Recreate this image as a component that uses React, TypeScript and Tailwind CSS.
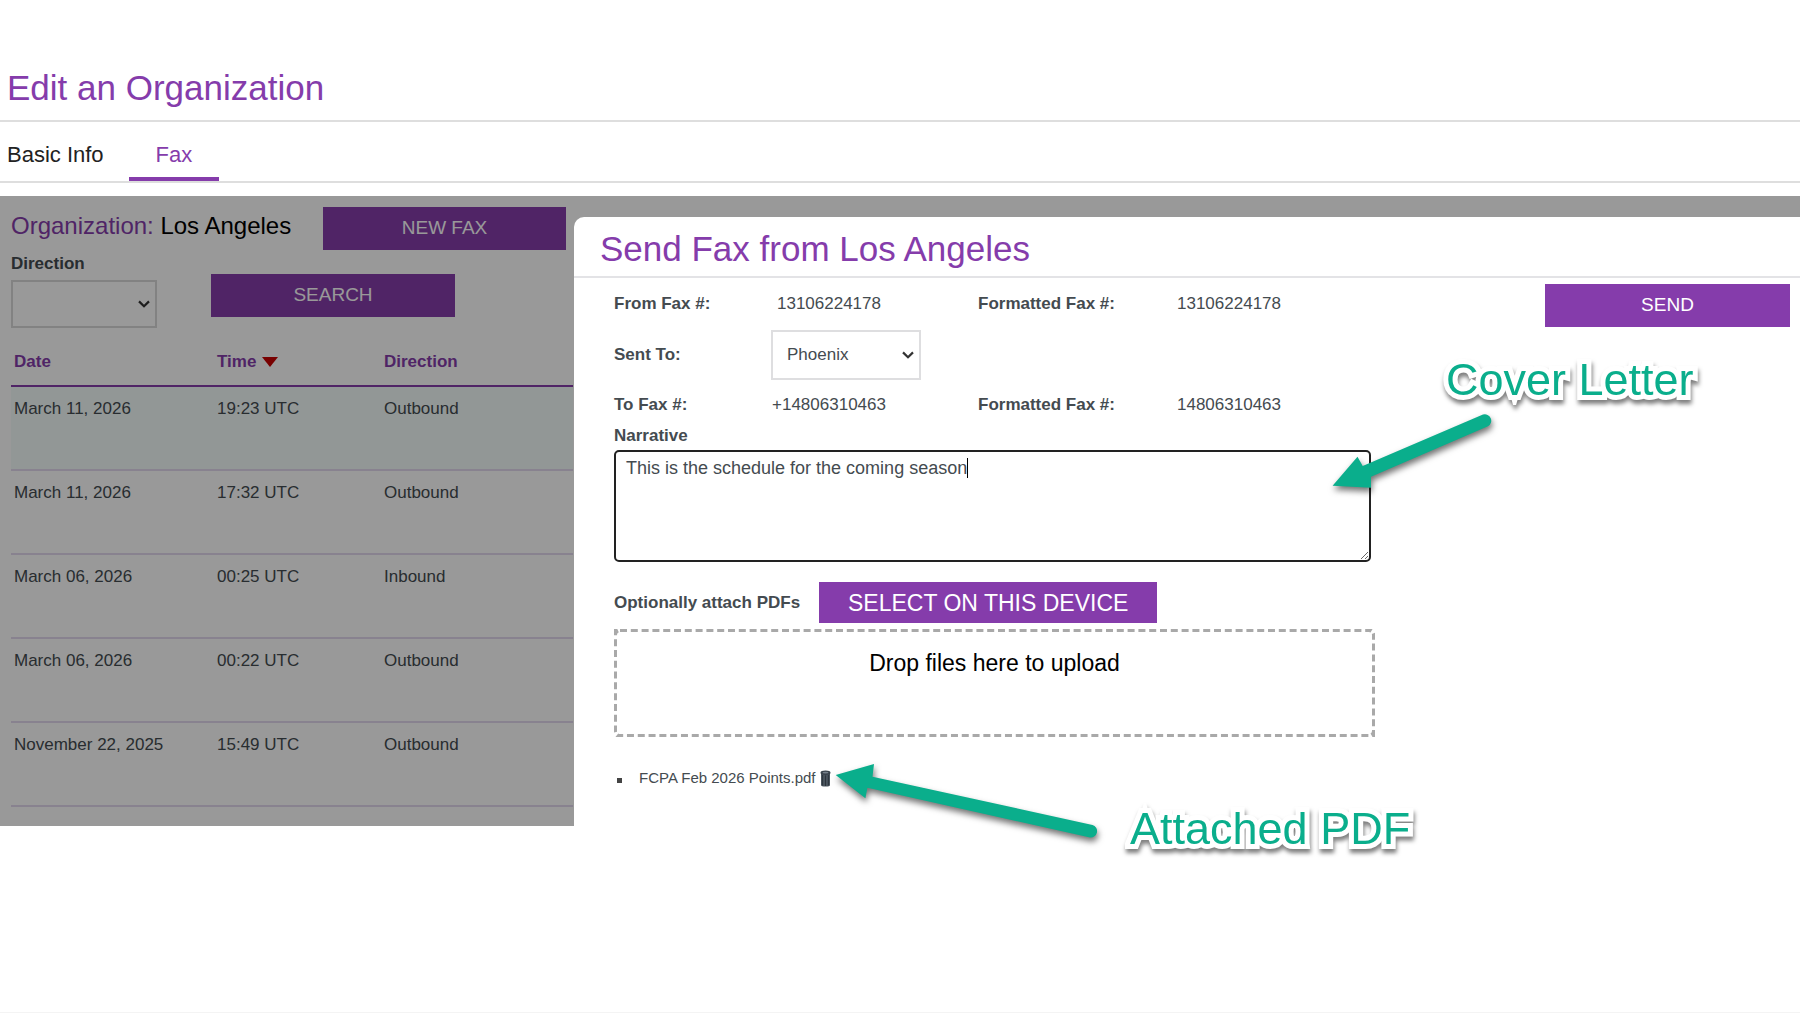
import { useState } from "react";

type FaxRow = {
	date: string;
	time: string;
	direction: string;
};

const faxes: FaxRow[] = [
	{ date: "March 11, 2026", time: "19:23 UTC", direction: "Outbound" },
	{ date: "March 11, 2026", time: "17:32 UTC", direction: "Outbound" },
	{ date: "March 06, 2026", time: "00:25 UTC", direction: "Inbound" },
	{ date: "March 06, 2026", time: "00:22 UTC", direction: "Outbound" },
	{ date: "November 22, 2025", time: "15:49 UTC", direction: "Outbound" },
];

const Chevron = () => (
	<svg
		className="pointer-events-none absolute right-[7px] top-1/2 -translate-y-1/2"
		width="12"
		height="8"
		viewBox="0 0 12 8"
		fill="none"
		stroke="#333"
		strokeWidth="2.2"
	>
		<path d="M1 1.4 6 6.2 11 1.4" />
	</svg>
);

const TrashIcon = () => (
	<svg width="11" height="17" viewBox="0 0 11 17">
		<path d="M1 3.5h9V15q0 1.5-4.5 1.5T1 15Z" fill="#4a545e" />
		<path d="M2.6 5v10.4M5.5 5.4v10.6M8.4 5v10.4" stroke="#2c343c" strokeWidth="1" />
		<ellipse cx="5.5" cy="2.8" rx="5" ry="2.2" fill="#3a434c" />
		<ellipse cx="5.5" cy="2.6" rx="3" ry="0.9" fill="#76818b" />
	</svg>
);

const FaxList = () => {
	return (
		<div className="w-[574px] shrink-0 pt-[11px] pr-2 pb-[14px] pl-[11px]">
			<div className="flex items-center justify-between">
				<h2 className="pb-[6px] text-[24px] leading-8 text-black">
					<span className="text-[#853cab]">Organization:</span> Los Angeles
				</h2>
				<button className="h-[43px] w-[243px] bg-[#853cab] text-[19px] text-white">NEW FAX</button>
			</div>

			<div className="mt-1 flex items-start gap-[54px]">
				<div>
					<label htmlFor="direction" className="block text-[17px] leading-5 font-bold">
						Direction
					</label>
					<div className="relative mt-[6px]">
						<select
							id="direction"
							className="block h-12 w-[146px] appearance-none border-2 border-[#d9d9d9] bg-transparent px-4"
						>
							<option></option>
							<option>Inbound</option>
							<option>Outbound</option>
						</select>
						<Chevron />
					</div>
				</div>
				<button className="mt-5 h-[43px] w-[244px] bg-[#853cab] text-[19px] text-white">
					SEARCH
				</button>
			</div>

			<table className="w-[562px] table-fixed border-separate border-spacing-0 text-left text-[17px] leading-5">
				<thead className="text-[#853cab]">
					<tr className="h-[59px] *:border-b-2 *:border-[#853cab] *:pl-[3px] *:pt-[10px]">
						<th className="w-[203px]">Date</th>
						<th className="w-[167px]">
							<span className="flex items-center gap-[6px]">
								Time
								<svg width="16" height="10" viewBox="0 0 16 10">
									<path d="M0 0h16L8 10Z" fill="#c80000" />
								</svg>
							</span>
						</th>
						<th>Direction</th>
					</tr>
				</thead>
				<tbody>
					{faxes.map((fax, index) => (
						<tr
							key={index}
							className="h-[84px] align-top first:bg-[#f4fcfb] *:border-b-2 *:border-[#e3d9ee] *:pl-[3px] *:pt-3"
						>
							<td>{fax.date}</td>
							<td>{fax.time}</td>
							<td>{fax.direction}</td>
						</tr>
					))}
				</tbody>
			</table>
		</div>
	);
};

const SendFax = () => {
	const [narrative, setNarrative] = useState("This is the schedule for the coming season");

	return (
		<div className="relative z-10 mt-[21px] min-w-0 flex-1 rounded-tl-[10px] bg-white">
			<header className="border-b-2 border-[#e3e3e6] pt-3 pb-[7px] pl-[26px]">
				<h2 className="text-[35px] leading-10 text-[#853cab]">Send Fax from Los Angeles</h2>
			</header>

			<div className="flex items-start justify-between pr-[10px] pb-[38px] pl-10">
				<form className="w-[761px]" onSubmit={(e) => e.preventDefault()}>
					<div className="grid grid-cols-[157px_207px_199px_auto] grid-rows-[52px_50px_50px] items-center text-[17px] leading-5">
						<b>From Fax #:</b>
						<span className="w-[116px] text-center">13106224178</span>
						<b>Formatted Fax #:</b>
						<span>13106224178</span>

						<label htmlFor="sentTo" className="font-bold">
							Sent To:
						</label>
						<div className="relative col-span-3 w-[150px]">
							<select
								id="sentTo"
								className="block h-[50px] w-full appearance-none border-2 border-[#dedee0] bg-transparent px-[14px]"
							>
								<option>Phoenix</option>
								<option>Los Angeles</option>
							</select>
							<Chevron />
						</div>

						<b>To Fax #:</b>
						<span className="w-[116px] text-center">+14806310463</span>
						<b>Formatted Fax #:</b>
						<span>14806310463</span>
					</div>

					<label htmlFor="narrative" className="block text-[17px] leading-3 font-bold">
						Narrative
					</label>
					<div className="relative mt-2 mr-1">
						<textarea
							id="narrative"
							value={narrative}
							onChange={(e) => setNarrative(e.target.value)}
							className="block h-28 w-full rounded-[5px] border-2 border-[#222] px-[10px] py-[6px] text-[18px] leading-5 outline-none"
						/>
						{/* text cursor */}
						<span className="absolute top-2 left-[353px] h-5 w-px bg-black" />
					</div>

					<div className="mt-5 flex items-center">
						<label htmlFor="pdfs" className="w-[205px] text-[17px] leading-5 font-bold">
							Optionally attach PDFs
						</label>
						<button id="pdfs" className="h-[41px] bg-[#853cab] px-[29px] text-[23px] leading-7 text-white">
							SELECT ON THIS DEVICE
						</button>
					</div>

					<div className="relative mt-[6px] h-[108px] pt-5 text-center text-[23px] leading-7 text-black">
						<svg className="absolute inset-0 size-full">
							<rect
								width="100%"
								height="100%"
								rx="6"
								fill="none"
								stroke="#a9a9a9"
								strokeWidth="6"
								strokeDasharray="7 3.8"
							/>
						</svg>
						Drop files here to upload
					</div>

					<ul className="mt-[31px] text-[15px] leading-5">
						<li className="flex items-center pl-[3px]">
							<span className="mt-1 mr-[17px] size-[5px] bg-[#444]" />
							FCPA Feb 2026 Points.pdf
							<button aria-label="Remove file" className="ml-1">
								<TrashIcon />
							</button>
						</li>
					</ul>
				</form>

				<button className="mt-[6px] h-[43px] w-[245px] bg-[#853cab] text-[19px] text-white">SEND</button>
			</div>

			{/* Callouts, pinned to the fields they point at */}
			<svg
				className="pointer-events-none absolute top-0 left-0 overflow-visible drop-shadow-[1px_4px_3px_rgba(0,0,0,0.55)]"
				width="1"
				height="1"
				fill="#0aae8c"
			>
				<path d="M758.6 268.7 783.5 239.7 788.7 249 909 197.6A6.4 6.4 0 0 1 914 209.3L797 259.7V270.7Z" />
				<path d="M261.7 558 300 547 298.5 559.7 518.5 608A6.4 6.4 0 0 1 516 620.5L293.4 570.7 291.4 581.3Z" />
			</svg>
			<span className="pointer-events-none absolute top-[138px] left-[872px] text-[45px] leading-[50px] whitespace-nowrap text-[#0aae8c] drop-shadow-[1px_4px_2px_rgba(0,0,0,0.5)] [-webkit-text-stroke:10px_white] [paint-order:stroke_fill]">
				Cover Letter
			</span>
			<span className="pointer-events-none absolute top-[587px] left-[556px] text-[45px] leading-[50px] whitespace-nowrap text-[#0aae8c] drop-shadow-[1px_4px_2px_rgba(0,0,0,0.5)] [-webkit-text-stroke:10px_white] [paint-order:stroke_fill]">
				Attached PDF
			</span>
		</div>
	);
};

const App = () => {
	return (
		<main className="min-h-screen border-b border-[#f4f4f4] bg-white font-['Liberation_Sans',Arial,sans-serif] text-[#444b50]">
			<header className="border-b-2 border-[#dedede] pt-17 pb-3 pl-[7px]">
				<h1 className="text-[35px] leading-10 text-[#853cab]">Edit an Organization</h1>
			</header>

			<nav className="flex border-b-2 border-[#dedede] px-[7px] pt-[19px] text-[22px] leading-7">
				<a href="#basic" className="text-[#222]">
					Basic Info
				</a>
				<a href="#fax" className="ml-[25px] border-b-4 border-[#853cab] px-[27px] pb-2 text-[#853cab]">
					Fax
				</a>
			</nav>

			<section className="relative mt-[13px] flex">
				<FaxList />
				<div className="pointer-events-none absolute inset-0 bg-black/40" />
				<SendFax />
			</section>
		</main>
	);
};

export default App;
